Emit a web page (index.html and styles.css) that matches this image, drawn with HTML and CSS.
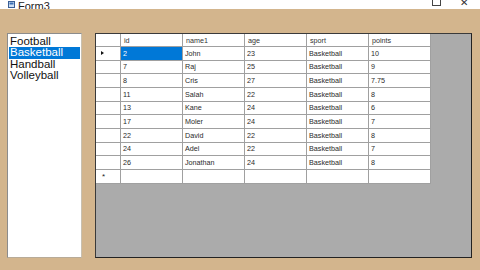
FILE: index.html
```html
<!DOCTYPE html>
<html>
<head>
<meta charset="utf-8">
<link rel="stylesheet" href="styles.css">
</head>
<body>
<div class="window">
  <div class="titlebar">
    <div class="title">
      <svg class="appicon" width="7" height="7" viewBox="0 0 7 7"><rect x="0.5" y="0.5" width="6" height="6" fill="#cfe0f5" stroke="#3a5f96"/><rect x="1.5" y="1.5" width="4" height="2" fill="#3a6fb4"/></svg>
      <span class="title-text">Form3</span>
    </div>
    <div class="controls">
      <span class="ctl max"></span>
      <span class="ctl close">✕</span>
    </div>
  </div>
  <div class="form">
    <ul class="listbox">
      <li>Football</li>
      <li class="sel">Basketball</li>
      <li>Handball</li>
      <li>Volleyball</li>
    </ul>
    <div class="dgv">
      <div class="table">
        <div class="row head">
          <div class="c rh"></div><div class="c">id</div><div class="c">name1</div><div class="c">age</div><div class="c">sport</div><div class="c">points</div>
        </div>
        <div class="row"><div class="c rh"><span class="arrow"></span></div><div class="c selcell">2</div><div class="c">John</div><div class="c">23</div><div class="c">Basketball</div><div class="c">10</div></div>
        <div class="row"><div class="c rh"></div><div class="c">7</div><div class="c">Raj</div><div class="c">25</div><div class="c">Basketball</div><div class="c">9</div></div>
        <div class="row"><div class="c rh"></div><div class="c">8</div><div class="c">Cris</div><div class="c">27</div><div class="c">Basketball</div><div class="c">7.75</div></div>
        <div class="row"><div class="c rh"></div><div class="c">11</div><div class="c">Salah</div><div class="c">22</div><div class="c">Basketball</div><div class="c">8</div></div>
        <div class="row"><div class="c rh"></div><div class="c">13</div><div class="c">Kane</div><div class="c">24</div><div class="c">Basketball</div><div class="c">6</div></div>
        <div class="row"><div class="c rh"></div><div class="c">17</div><div class="c">Moler</div><div class="c">24</div><div class="c">Basketball</div><div class="c">7</div></div>
        <div class="row"><div class="c rh"></div><div class="c">22</div><div class="c">David</div><div class="c">22</div><div class="c">Basketball</div><div class="c">8</div></div>
        <div class="row"><div class="c rh"></div><div class="c">24</div><div class="c">Adel</div><div class="c">22</div><div class="c">Basketball</div><div class="c">7</div></div>
        <div class="row"><div class="c rh"></div><div class="c">26</div><div class="c">Jonathan</div><div class="c">24</div><div class="c">Basketball</div><div class="c">8</div></div>
        <div class="row"><div class="c rh star">*</div><div class="c"></div><div class="c"></div><div class="c"></div><div class="c"></div><div class="c"></div></div>
      </div>
    </div>
  </div>
</div>
</body>
</html>
```
FILE: styles.css
```css
html, body {
  margin: 0;
  padding: 0;
}
body {
  width: 480px;
  height: 270px;
  overflow: hidden;
  background: #d3b58d;
  font-family: "Liberation Sans", Arial, sans-serif;
}
.window {
  width: 480px;
  height: 270px;
  display: flex;
  flex-direction: column;
}
.titlebar {
  height: 9px;
  background: #ffffff;
  overflow: hidden;
  display: flex;
  justify-content: space-between;
  align-items: flex-end;
}
.title {
  display: flex;
  align-items: flex-end;
  padding-left: 8px;
  gap: 3px;
}
.appicon {
  display: block;
  margin-bottom: 1px;
}
.title-text {
  font-size: 11px;
  line-height: 11px;
  color: #222;
  margin-bottom: -3px;
}
.controls {
  display: flex;
  align-items: flex-end;
  gap: 19px;
  padding-right: 12px;
}
.ctl.max {
  width: 7px;
  height: 5px;
  border: 1px solid #444;
  border-top: none;
  margin-bottom: 3px;
}
.ctl.close {
  font-size: 10px;
  line-height: 10px;
  color: #333;
  margin-bottom: 1px;
}
.form {
  flex: 1;
  display: flex;
  padding: 24px 8px 12px 7px;
  gap: 13px;
  background: #d3b58d;
}
.listbox {
  list-style: none;
  margin: 0;
  padding: 2px 1px 0 1px;
  width: 75px;
  height: 225px;
  box-sizing: border-box;
  background: #ffffff;
  border: 1px solid #8c8c8c;
  border-right-color: #c8c0b0;
  border-bottom-color: #b8ab98;
  font-size: 11.5px;
  line-height: 11.4px;
  color: #111;
}
.listbox li {
  padding-left: 1px;
}
.listbox li.sel {
  background: #0078d7;
  color: #ffffff;
}
.dgv {
  width: 377px;
  height: 225px;
  box-sizing: border-box;
  background: #ababab;
  border: 1px solid #3a3a3a;
  border-right-color: #222;
  border-bottom-color: #222;
}
.table {
  display: grid;
  grid-template-rows: 13px repeat(10, 13.66px);
  width: 335px;
  font-size: 7.2px;
  color: #2a2a2a;
}
.row {
  display: grid;
  grid-template-columns: 25px repeat(5, 62px);
}
.c {
  background: #ffffff;
  border-right: 1px solid #a0a0a0;
  border-bottom: 1px solid #a0a0a0;
  box-sizing: border-box;
  display: flex;
  align-items: center;
  padding-left: 2px;
  white-space: nowrap;
  overflow: hidden;
}
.head .c {
  padding-left: 3px;
  color: #333;
}
.rh {
  justify-content: flex-start;
  padding-left: 5px;
}
.arrow {
  width: 0;
  height: 0;
  border-top: 2.5px solid transparent;
  border-bottom: 2.5px solid transparent;
  border-left: 3px solid #111;
}
.star {
  font-size: 8px;
  padding-left: 6px;
  color: #222;
}
.selcell {
  background: #0078d7;
  color: #ffffff;
}
```
